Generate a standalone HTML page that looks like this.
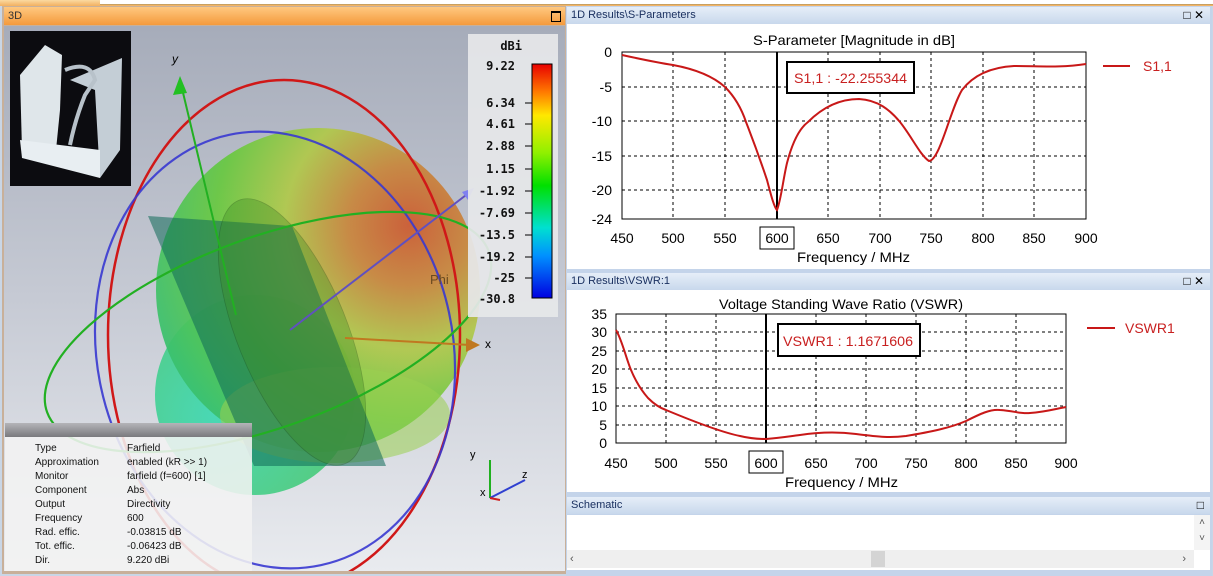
<!DOCTYPE html><html><head><style>
body{margin:0;width:1213px;height:576px;overflow:hidden;background:#c9d6e6;font-family:"Liberation Sans",sans-serif;position:relative}
.a{position:absolute}
.hd{font-size:11px;color:#1a3060;line-height:16px;padding-left:4px;box-sizing:border-box}
</style></head><body>
<div class="a" style="left:0;top:0;width:1213px;height:6px;background:linear-gradient(#fbd9a0,#f2b060)"></div>
<div class="a" style="left:100px;top:0;width:1113px;height:4px;background:#fff;border-bottom:1px solid #c9a060"></div>
<div class="a" style="left:2px;top:6px;width:564px;height:568px;background:#c8b09a"></div>
<div class="a hd" style="left:4px;top:7px;width:561px;height:18px;background:linear-gradient(#ffc880,#f49a3c);color:#333;line-height:18px">3D<span style="position:absolute;right:4px;top:4px;width:8px;height:8px;border:1px solid #000;border-top-width:2px"></span></div>
<svg class="a" style="left:4px;top:26px" width="561" height="545" viewBox="4 26 561 545">
<defs>
<linearGradient id="bg" x1="0" y1="0" x2="0" y2="1"><stop offset="0" stop-color="#a6acba"/><stop offset="0.5" stop-color="#c6cad4"/><stop offset="1" stop-color="#e9ebef"/></linearGradient>
<radialGradient id="bl" cx="0.78" cy="0.3" r="0.85"><stop offset="0" stop-color="#cc5a30"/><stop offset="0.22" stop-color="#c8863c"/><stop offset="0.45" stop-color="#b0c84a"/><stop offset="0.7" stop-color="#68c840"/><stop offset="1" stop-color="#38c070"/></radialGradient>
<radialGradient id="bl2" cx="0.3" cy="0.6" r="0.7"><stop offset="0" stop-color="#3ad8b0"/><stop offset="1" stop-color="#48c870"/></radialGradient>
</defs>
<rect x="4" y="26" width="561" height="545" fill="url(#bg)"/>
<ellipse cx="255" cy="395" rx="100" ry="100" fill="url(#bl2)" opacity="0.9"/>
<circle cx="318" cy="290" r="162" fill="url(#bl)" opacity="0.93"/>
<ellipse cx="335" cy="415" rx="115" ry="48" fill="#9ad050" opacity="0.55"/>
<polygon points="148,216 292,226 386,466 254,466" fill="#0e6a58" opacity="0.55"/>
<ellipse cx="292" cy="332" rx="55" ry="142" transform="rotate(-22 292 332)" fill="#3a8a20" opacity="0.35" stroke="#1a4a10" stroke-width="0.8"/>
<ellipse cx="284" cy="335" rx="176" ry="255" fill="none" stroke="#d01818" stroke-width="2.5"/>
<ellipse cx="275" cy="350" rx="178" ry="220" transform="rotate(-12 275 350)" fill="none" stroke="#3838d0" stroke-width="2.2" opacity="0.9"/>
<ellipse cx="268" cy="332" rx="235" ry="95" transform="rotate(-20 268 332)" fill="none" stroke="#22b022" stroke-width="2.2"/>
<line x1="236" y1="315" x2="180" y2="80" stroke="#22b022" stroke-width="2"/><polygon points="180,76 173,95 187,93" fill="#22c022"/>
<line x1="290" y1="330" x2="470" y2="192" stroke="#6050c0" stroke-width="2"/><polygon points="474,188 462,192 468,200" fill="#8080f0"/>
<line x1="345" y1="338" x2="470" y2="345" stroke="#c07820" stroke-width="2"/><polygon points="480,345 466,338 466,352" fill="#c07820"/>
<text x="172" y="63" font-size="12" font-style="italic">y</text>
<text x="485" y="348" font-size="12">x</text>
<text x="430" y="284" font-size="13" fill="#6a4a20">Phi</text>
<rect x="10" y="31" width="121" height="155" fill="#0c0c10"/>
<path d="M20,75 L45,45 L62,55 L60,110 L55,160 L22,150 Z" fill="#dfe6ea"/>
<path d="M70,80 L122,58 L120,150 L100,178 L95,90 Z" fill="#c4ced6"/>
<path d="M20,140 L100,150 L100,178 L22,158 Z" fill="#e8eef2"/>
<path d="M65,70 Q90,60 95,80 L85,95 Q75,120 70,145" stroke="#b8c2ca" fill="none" stroke-width="4"/>
<rect x="468" y="34" width="90" height="283" fill="#e6e7ea" opacity="0.93"/>
<defs><linearGradient id="cb" x1="0" y1="0" x2="0" y2="1"><stop offset="0" stop-color="#e80000"/><stop offset="0.12" stop-color="#ff7a00"/><stop offset="0.22" stop-color="#ffe800"/><stop offset="0.38" stop-color="#90f000"/><stop offset="0.52" stop-color="#00e000"/><stop offset="0.7" stop-color="#00e0d0"/><stop offset="0.82" stop-color="#0090ff"/><stop offset="1" stop-color="#0000e0"/></linearGradient></defs>
<rect x="532" y="64" width="20" height="234" fill="url(#cb)" stroke="#000"/>
<g font-family="DejaVu Sans Mono,monospace" font-weight="bold" font-size="12" fill="#111" text-anchor="end">
<text x="522" y="50">dBi</text><text x="515" y="70">9.22</text><text x="515" y="107">6.34</text><text x="515" y="128">4.61</text><text x="515" y="150">2.88</text><text x="515" y="173">1.15</text><text x="515" y="195">-1.92</text><text x="515" y="217">-7.69</text><text x="515" y="239">-13.5</text><text x="515" y="261">-19.2</text><text x="515" y="282">-25</text><text x="515" y="303">-30.8</text>
</g>
<g stroke="#000"><line x1="525" y1="103" x2="532" y2="103"/><line x1="525" y1="124" x2="532" y2="124"/><line x1="525" y1="146" x2="532" y2="146"/><line x1="525" y1="169" x2="532" y2="169"/><line x1="525" y1="191" x2="532" y2="191"/><line x1="525" y1="213" x2="532" y2="213"/><line x1="525" y1="235" x2="532" y2="235"/><line x1="525" y1="257" x2="532" y2="257"/><line x1="525" y1="278" x2="532" y2="278"/></g>
<line x1="490" y1="498" x2="490" y2="460" stroke="#20b020" stroke-width="2"/>
<line x1="490" y1="498" x2="525" y2="480" stroke="#3040d0" stroke-width="2"/>
<line x1="490" y1="498" x2="500" y2="500" stroke="#d02020" stroke-width="2"/>
<text x="470" y="458" font-size="11">y</text><text x="522" y="478" font-size="11">z</text><text x="480" y="496" font-size="11">x</text>
<defs><linearGradient id="ih" x1="0" y1="0" x2="0" y2="1"><stop offset="0" stop-color="#b4b4b8"/><stop offset="1" stop-color="#7a7a7e"/></linearGradient></defs>
<rect x="5" y="423" width="247" height="14" fill="url(#ih)"/>
<rect x="5" y="437" width="247" height="134" fill="#f2f2f2" opacity="0.88"/>
<g font-size="10" fill="#111">
<text x="35" y="451">Type</text><text x="127" y="451">Farfield</text>
<text x="35" y="465">Approximation</text><text x="127" y="465">enabled (kR &gt;&gt; 1)</text>
<text x="35" y="479">Monitor</text><text x="127" y="479">farfield (f=600) [1]</text>
<text x="35" y="493">Component</text><text x="127" y="493">Abs</text>
<text x="35" y="507">Output</text><text x="127" y="507">Directivity</text>
<text x="35" y="521">Frequency</text><text x="127" y="521">600</text>
<text x="35" y="535">Rad. effic.</text><text x="127" y="535">-0.03815 dB</text>
<text x="35" y="549">Tot. effic.</text><text x="127" y="549">-0.06423 dB</text>
<text x="35" y="563">Dir.</text><text x="127" y="563">9.220 dBi</text>
</g>
</svg>
<div class="a" style="left:566px;top:6px;width:646px;height:570px;background:#c4d4ea"></div>
<div class="a hd" style="left:567px;top:7px;width:643px;height:17px;background:linear-gradient(#e6eef8,#c8d8ec)">1D Results\S-Parameters<span style="position:absolute;right:6px;top:0;font-size:12px;color:#000">□ ✕</span></div>
<svg class="a" style="left:567px;top:24px" width="643" height="245" viewBox="567 24 643 245">
<rect x="567" y="24" width="643" height="245" fill="#fff"/>
<g stroke="#000" stroke-dasharray="3,3" stroke-width="1"><line x1="673" y1="52" x2="673" y2="219"/><line x1="725" y1="52" x2="725" y2="219"/><line x1="828" y1="52" x2="828" y2="219"/><line x1="880" y1="52" x2="880" y2="219"/><line x1="931" y1="52" x2="931" y2="219"/><line x1="983" y1="52" x2="983" y2="219"/><line x1="1034" y1="52" x2="1034" y2="219"/><line x1="622" y1="87" x2="1086" y2="87"/><line x1="622" y1="121" x2="1086" y2="121"/><line x1="622" y1="156" x2="1086" y2="156"/><line x1="622" y1="190" x2="1086" y2="190"/></g>
<rect x="622" y="52" width="464" height="167" fill="none" stroke="#000"/>
<line x1="777" y1="52" x2="777" y2="219" stroke="#000" stroke-width="2"/>
<path d="M622,55 C640,59 660,63 673,65 C700,70 715,78 725,87 C735,97 742,110 746,122 C755,145 762,165 767,180 C771,195 774,207 777,210 C781,200 783,180 787,163 C793,140 800,128 808,122 C825,105 843,99 859,99 C878,100 890,110 900,122 C912,137 920,155 929,161 C940,160 950,110 962,90 C975,73 995,67 1014,66 C1040,66 1060,68 1086,64" fill="none" stroke="#c81818" stroke-width="2"/>
<rect x="787" y="62" width="127" height="31" fill="#fff" stroke="#000" stroke-width="2"/>
<text x="794" y="83" font-size="14" fill="#c82020" textLength="113" lengthAdjust="spacingAndGlyphs">S1,1 : -22.255344</text>
<text x="753" y="45" font-size="14" textLength="202" lengthAdjust="spacingAndGlyphs">S-Parameter [Magnitude in dB]</text>
<g font-size="14" text-anchor="end"><text x="612" y="57">0</text><text x="612" y="92">-5</text><text x="612" y="126">-10</text><text x="612" y="161">-15</text><text x="612" y="195">-20</text><text x="612" y="224">-24</text></g>
<g font-size="14" text-anchor="middle"><text x="622" y="243">450</text><text x="673" y="243">500</text><text x="725" y="243">550</text><text x="777" y="243">600</text><text x="828" y="243">650</text><text x="880" y="243">700</text><text x="931" y="243">750</text><text x="983" y="243">800</text><text x="1034" y="243">850</text><text x="1086" y="243">900</text></g>
<text x="797" y="262" font-size="14" textLength="113" lengthAdjust="spacingAndGlyphs">Frequency / MHz</text>
<rect x="760" y="227" width="34" height="22" fill="none" stroke="#000"/>
<line x1="1103" y1="66" x2="1130" y2="66" stroke="#c81818" stroke-width="2"/>
<text x="1143" y="71" font-size="14" fill="#c82020">S1,1</text>
</svg>
<div class="a hd" style="left:567px;top:273px;width:643px;height:17px;background:linear-gradient(#e6eef8,#c8d8ec)">1D Results\VSWR:1<span style="position:absolute;right:6px;top:0;font-size:12px;color:#000">□ ✕</span></div>
<svg class="a" style="left:567px;top:290px" width="643" height="202" viewBox="567 290 643 202">
<rect x="567" y="290" width="643" height="202" fill="#fff"/>
<g stroke="#000" stroke-dasharray="3,3"><line x1="666" y1="314" x2="666" y2="443"/><line x1="716" y1="314" x2="716" y2="443"/><line x1="816" y1="314" x2="816" y2="443"/><line x1="866" y1="314" x2="866" y2="443"/><line x1="916" y1="314" x2="916" y2="443"/><line x1="966" y1="314" x2="966" y2="443"/><line x1="1016" y1="314" x2="1016" y2="443"/><line x1="616" y1="332" x2="1066" y2="332"/><line x1="616" y1="351" x2="1066" y2="351"/><line x1="616" y1="369" x2="1066" y2="369"/><line x1="616" y1="388" x2="1066" y2="388"/><line x1="616" y1="406" x2="1066" y2="406"/><line x1="616" y1="425" x2="1066" y2="425"/></g>
<rect x="616" y="314" width="450" height="129" fill="none" stroke="#000"/>
<line x1="766" y1="314" x2="766" y2="443" stroke="#000" stroke-width="2"/>
<path d="M616,330 C622,340 626,358 631,370 C636,382 641,390 648,398 C655,405 660,408 666,410 C690,420 720,432 740,436 C752,439 760,439 766,439 C780,438 785,437 800,435 C820,432 840,432 856,434 C880,437 890,438 906,436 C930,432 950,428 966,421 C980,414 990,409 1000,410 C1015,411 1020,414 1030,413 C1045,412 1055,409 1066,407" fill="none" stroke="#c81818" stroke-width="2"/>
<rect x="778" y="324" width="142" height="32" fill="#fff" stroke="#000" stroke-width="2"/>
<text x="783" y="346" font-size="14" fill="#c82020" textLength="130" lengthAdjust="spacingAndGlyphs">VSWR1 : 1.1671606</text>
<text x="719" y="309" font-size="14" textLength="244" lengthAdjust="spacingAndGlyphs">Voltage Standing Wave Ratio (VSWR)</text>
<g font-size="14" text-anchor="end"><text x="607" y="319">35</text><text x="607" y="337">30</text><text x="607" y="356">25</text><text x="607" y="374">20</text><text x="607" y="393">15</text><text x="607" y="411">10</text><text x="607" y="430">5</text><text x="607" y="448">0</text></g>
<g font-size="14" text-anchor="middle"><text x="616" y="468">450</text><text x="666" y="468">500</text><text x="716" y="468">550</text><text x="766" y="468">600</text><text x="816" y="468">650</text><text x="866" y="468">700</text><text x="916" y="468">750</text><text x="966" y="468">800</text><text x="1016" y="468">850</text><text x="1066" y="468">900</text></g>
<text x="785" y="487" font-size="14" textLength="113" lengthAdjust="spacingAndGlyphs">Frequency / MHz</text>
<rect x="749" y="451" width="34" height="22" fill="none" stroke="#000"/>
<line x1="1087" y1="328" x2="1115" y2="328" stroke="#c81818" stroke-width="2"/>
<text x="1125" y="333" font-size="14" fill="#c82020">VSWR1</text>
</svg>
<div class="a hd" style="left:567px;top:497px;width:643px;height:17px;background:linear-gradient(#e6eef8,#c8d8ec)">Schematic<span style="position:absolute;right:6px;top:0;font-size:12px;color:#000">□</span></div>
<div class="a" style="left:567px;top:515px;width:643px;height:55px;background:#fff"></div>
<div class="a" style="left:567px;top:550px;width:627px;height:18px;background:#efefef;font-size:11px;color:#555;line-height:18px">&nbsp;‹<span style="position:absolute;left:304px;top:1px;width:14px;height:16px;background:#d4d4d4"></span><span style="position:absolute;right:8px">›</span></div>
<div class="a" style="left:1194px;top:515px;width:16px;height:35px;background:#f4f4f4;font-size:10px;color:#555;text-align:center;line-height:16px">˄<br>˅</div>
</body></html>
